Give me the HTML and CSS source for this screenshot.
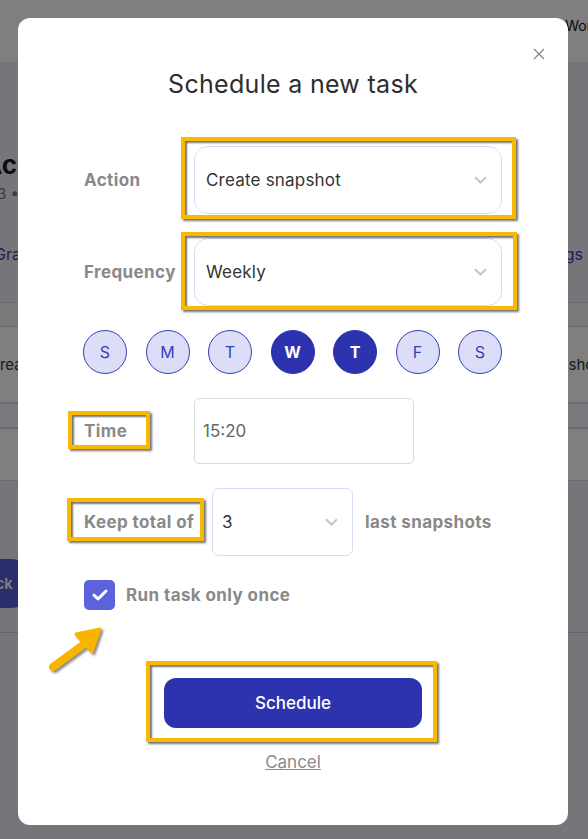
FILE: index.html
```html
<!DOCTYPE html>
<html lang="en">

<head>
    <meta charset="UTF-8">
    <meta name="viewport" content="width=device-width, initial-scale=1.0">
    <title>Schedule a new task</title>
    <link rel="stylesheet" href="styles.css">
</head>

<body>
    <div class="page">
        <header class="topbar">
            <span class="topbar-link">Workspace</span>
        </header>
        <main class="page-main">
            <h1 class="page-title">Account</h1>
            <p class="page-meta">3 • 12 GB</p>
            <nav class="tabs">
                <a class="tab">Graphs</a>
                <a class="tab">Settings</a>
            </nav>
            <div class="rows">
                <div class="row row-head"></div>
                <div class="row"><span>Create</span><span>Snapshots</span></div>
                <div class="row row-head"></div>
                <div class="row row-empty"></div>
            </div>
            <button class="back-btn">Back</button>
            <div class="divider"></div>
        </main>
    </div>

    <div class="overlay">
        <div class="modal">
            <button class="modal-close" type="button" aria-label="Close">
                <svg width="12" height="12" viewBox="0 0 12 12">
                    <path d="M1 1L11 11M11 1L1 11" stroke="#8a8a8a" stroke-width="1.4" fill="none" />
                </svg>
            </button>

            <h2 class="modal-title">Schedule a new task</h2>

            <form class="task-form" onsubmit="event.preventDefault();">
                <div class="field">
                    <label class="field-label">Action</label>
                    <div class="select">
                        <span>Create snapshot</span>
                        <svg class="chevron" width="13" height="8" viewBox="0 0 13 8">
                            <path d="M1 1.2L6.5 6.5L12 1.2" />
                        </svg>
                        <span class="mark mark-action"></span>
                    </div>
                </div>

                <div class="field">
                    <label class="field-label">Frequency</label>
                    <div class="select">
                        <span>Weekly</span>
                        <svg class="chevron" width="13" height="8" viewBox="0 0 13 8">
                            <path d="M1 1.2L6.5 6.5L12 1.2" />
                        </svg>
                        <span class="mark mark-frequency"></span>
                    </div>
                </div>

                <div class="days">
                    <span class="day">S</span>
                    <span class="day">M</span>
                    <span class="day">T</span>
                    <span class="day day-on">W</span>
                    <span class="day day-on">T</span>
                    <span class="day">F</span>
                    <span class="day">S</span>
                </div>

                <div class="field">
                    <label class="field-label">
                        <span class="label-text">Time<span class="mark mark-time"></span></span>
                    </label>
                    <input class="time-input" type="text" value="15:20">
                </div>

                <div class="keep-row">
                    <label class="keep-label">
                        <span class="label-text">Keep total of<span class="mark mark-keep"></span></span>
                    </label>
                    <div class="select select-small">
                        <span>3</span>
                        <svg class="chevron" width="13" height="8" viewBox="0 0 13 8">
                            <path d="M1 1.2L6.5 6.5L12 1.2" />
                        </svg>
                    </div>
                    <span class="keep-suffix">last snapshots</span>
                </div>

                <label class="check">
                    <span class="check-box">
                        <svg width="16" height="12" viewBox="0 0 16 12">
                            <path d="M2 6.2L6 10L14 2" />
                        </svg>
                    </span>
                    Run task only once
                </label>

                <div class="actions">
                    <div class="submit-wrap">
                        <button class="btn-schedule" type="submit">Schedule</button>
                        <span class="mark mark-submit"></span>
                    </div>
                    <a class="cancel" href="#">Cancel</a>
                </div>
            </form>

            <!-- annotation arrow pointing at the checkbox -->
            <svg class="pointer-arrow" width="62" height="50" viewBox="0 0 62 50">
                <path d="M7 43L37 21" stroke="#f7b500" stroke-width="8" stroke-linecap="round" fill="none" />
                <path d="M54 5L30 10L46 28Z" fill="#f7b500" stroke="#f7b500" stroke-width="3" stroke-linejoin="round" />
            </svg>
        </div>
    </div>
</body>

</html>
```

FILE: styles.css
```css
* {
    box-sizing: border-box;
}

html,
body {
    margin: 0;
    height: 100%;
    overflow: hidden;
}

body {
    font-family: Inter, "Noto Sans", sans-serif;
    background: #eceaf3;
    color: #222;
}

/* page under the dialog */

.topbar {
    height: 62px;
    background: #ffffff;
    display: flex;
    justify-content: flex-end;
    align-items: flex-start;
    padding-top: 17px;
}

.topbar-link {
    font-size: 14px;
    color: #111;
    margin-right: -52px;
}

.page-main {
    margin: 0 -19px 0 -17px;
    padding-top: 87px;
}

.page-title {
    margin: 0;
    font-size: 26px;
    line-height: 32px;
    font-weight: 700;
    color: #1c1c1c;
}

.page-meta {
    margin: 4px 0 0;
    font-size: 15px;
    line-height: 18px;
    color: #777;
    padding-left: 14px;
}

.tabs {
    display: flex;
    justify-content: space-between;
    margin-top: 42px;
    padding: 0 24px 0 11px;
    font-size: 16px;
    line-height: 18px;
    color: #3c40b0;
}

.rows {
    margin-top: 39px;
}

.row {
    display: flex;
    justify-content: space-between;
    align-items: center;
    height: 76px;
    padding: 0 0 0 6px;
    border-bottom: 1px solid #d6d4e6;
    font-size: 15px;
    color: #333;
    background: #ffffff;
}

.row-head {
    height: 25px;
    border-top: 1px solid #d6d4e6;
    background: #f2f1f7;
}

.row-empty {
    height: 53px;
    border-top: 1px solid #c8c6dc;
}

.back-btn {
    margin: 78px 0 0 -28px;
    height: 49px;
    width: 80px;
    border: none;
    border-radius: 24px;
    background: #565cd8;
    color: #fff;
    font: 600 15px Inter, sans-serif;
}

.divider {
    margin-top: 24px;
    border-top: 1px solid #c8c6dc;
}

/* dialog */

.overlay {
    position: fixed;
    inset: 0;
    background: rgba(0, 0, 0, 0.5);
    display: flex;
    align-items: flex-start;
    padding: 18px 20px 14px 18px;
}

.modal {
    position: relative;
    width: 550px;
    height: 807px;
    background: #ffffff;
    border-radius: 12px;
    padding: 51px 66px 0;
}

.modal-close {
    position: absolute;
    top: 30px;
    right: 23px;
    width: 12px;
    height: 12px;
    padding: 0;
    border: none;
    background: none;
    display: flex;
}

.modal-title {
    margin: 0;
    text-align: center;
    font-size: 25px;
    line-height: 30px;
    font-weight: 400;
    letter-spacing: 0.3px;
    color: #2e2e2e;
}

.task-form {
    margin-top: 47px;
    display: flex;
    flex-direction: column;
    gap: 24px;
}

.field {
    display: grid;
    grid-template-columns: 110px 308px;
    align-items: center;
}

.field-label,
.keep-label,
.keep-suffix,
.check {
    font-size: 17px;
    line-height: 20px;
    font-weight: 700;
    letter-spacing: 0.4px;
    color: #898989;
}

.label-text {
    position: relative;
    display: inline-block;
}

.select {
    position: relative;
    height: 68px;
    border: 1px solid #d9dbf6;
    border-radius: 14px;
    display: flex;
    align-items: center;
    justify-content: space-between;
    padding: 0 14px 0 11px;
    font-size: 17px;
    letter-spacing: 0.2px;
    color: #333;
}

.chevron path {
    fill: none;
    stroke: #c6c6c6;
    stroke-width: 2;
}

.select-small {
    width: 141px;
    border-radius: 7px;
    padding-left: 9px;
    margin-right: 12px;
}

.days {
    display: flex;
    justify-content: space-between;
    margin-left: -1px;
}

.day {
    width: 44px;
    height: 44px;
    border-radius: 50%;
    border: 1px solid #3a3eb4;
    background: #dcdef8;
    color: #3a3eb4;
    display: flex;
    align-items: center;
    justify-content: center;
    font-size: 16px;
}

.day-on {
    background: #2d33ae;
    border-color: #2d33ae;
    color: #ffffff;
    font-weight: 700;
}

.time-input {
    width: 220px;
    height: 66px;
    border: 1px solid #dadada;
    border-radius: 5px;
    padding: 0 8px;
    font: 17px Inter, sans-serif;
    color: #666;
    outline: none;
}

.keep-row {
    display: flex;
    align-items: center;
}

.keep-label {
    width: 128px;
    flex-shrink: 0;
}

.check {
    display: flex;
    align-items: center;
    gap: 11px;
    height: 30px;
}

.check-box {
    width: 31px;
    height: 30px;
    border-radius: 5px;
    background: #5c62dc;
    display: flex;
    align-items: center;
    justify-content: center;
}

.check-box path {
    fill: none;
    stroke: #ffffff;
    stroke-width: 3;
    stroke-linecap: round;
    stroke-linejoin: round;
}

.actions {
    margin-top: 44px;
    display: flex;
    flex-direction: column;
    align-items: center;
    gap: 24px;
}

.submit-wrap {
    position: relative;
}

.btn-schedule {
    width: 258px;
    height: 50px;
    border: none;
    border-radius: 12px;
    background: #2d33ae;
    color: #ffffff;
    font: 500 17px Inter, sans-serif;
}

.cancel {
    font-size: 17px;
    line-height: 20px;
    color: #8a8a8a;
    text-decoration: underline;
}

/* yellow annotation frames drawn over the screenshot */

.mark {
    position: absolute;
    border: 4px solid #fbb800;
    box-shadow: 2px 2px 2px rgba(0, 0, 0, 0.55), inset 2px 2px 2px rgba(0, 0, 0, 0.55);
    pointer-events: none;
}

.mark-action {
    top: -10px;
    bottom: -6px;
    left: -14px;
    right: -15px;
}

.mark-frequency {
    top: -7px;
    bottom: -5px;
    left: -14px;
    right: -16px;
}

.mark-time {
    top: -10px;
    left: -16px;
    width: 82px;
    height: 38px;
}

.mark-keep {
    top: -14px;
    left: -17px;
    width: 137px;
    height: 43px;
}

.mark-submit {
    top: -17px;
    bottom: -14px;
    left: -18px;
    right: -15px;
}

.pointer-arrow {
    position: absolute;
    left: 28px;
    top: 606px;
    filter: drop-shadow(2px 2px 1px rgba(0, 0, 0, 0.45));
}
```
